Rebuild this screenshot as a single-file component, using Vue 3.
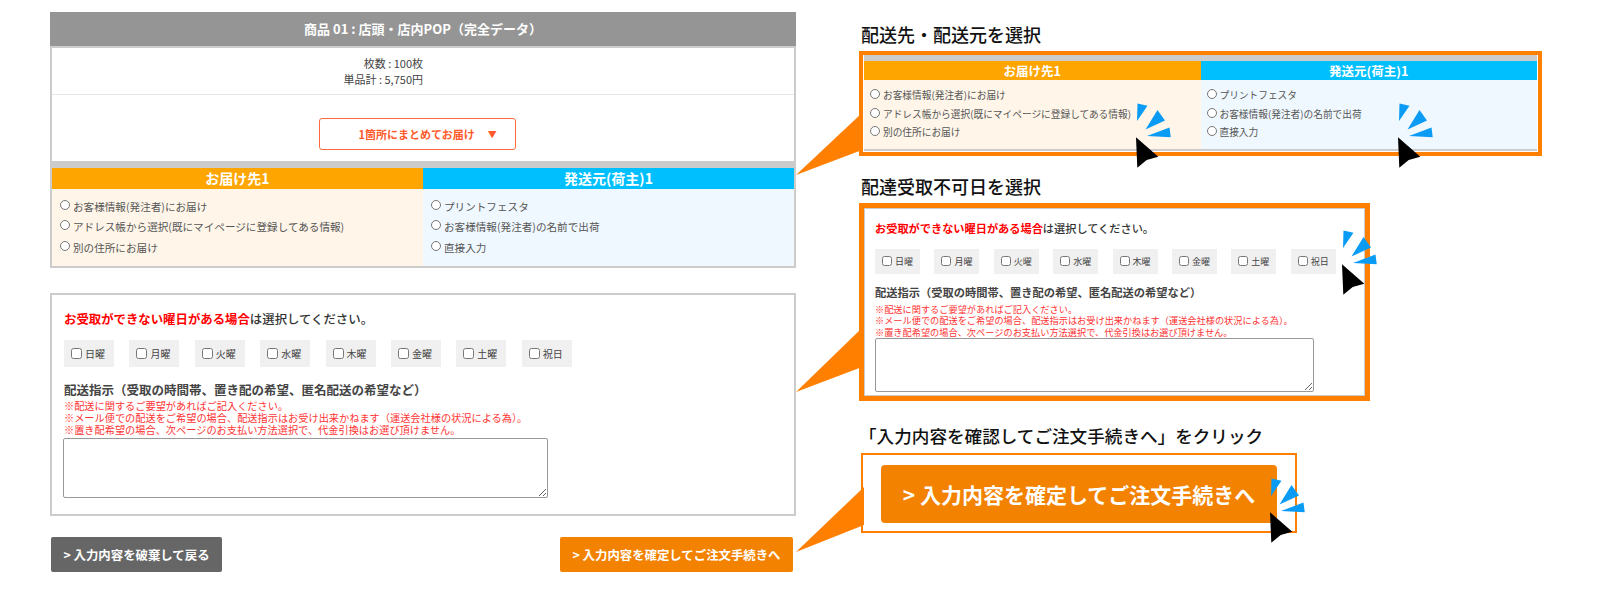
<script setup>
const daysOff = ['日曜', '月曜', '火曜', '水曜', '木曜', '金曜', '土曜', '祝日']
const destinations = ['お客様情報(発注者)にお届け', 'アドレス帳から選択(既にマイページに登録してある情報)', '別の住所にお届け']
const senders = ['プリントフェスタ', 'お客様情報(発注者)の名前で出荷', '直接入力']
const notes = [
  '※配送に関するご要望があればご記入ください。',
  '※メール便での配送をご希望の場合、配送指示はお受け出来かねます（運送会社様の状況による為）。',
  '※置き配希望の場合、次ページのお支払い方法選択で、代金引換はお選び頂けません。',
]
const bursts = [
  { left: 1136, top: 103 },
  { left: 1398, top: 103 },
  { left: 1342, top: 230 },
  { left: 1270, top: 478 },
]
</script>

<template>
  <div class="page">
    <main class="left">
      <section class="product">
        <h2 class="product-title">商品 01 : 店頭・店内POP（完全データ）</h2>
        <div class="info">
          <div>枚数 : 100枚</div>
          <div>単品計 : 5,750円</div>
        </div>
        <div class="select-row">
          <div class="select"><span>1箇所にまとめてお届け</span><span class="arrow">▼</span></div>
        </div>
        <div class="band"></div>
        <div class="ship">
          <div class="ship-col dest">
            <h3>お届け先1</h3>
            <ul>
              <li v-for="d in destinations" :key="d"><input type="radio" name="a" /><span>{{ d }}</span></li>
            </ul>
          </div>
          <div class="ship-col from">
            <h3>発送元(荷主)1</h3>
            <ul>
              <li v-for="s in senders" :key="s"><input type="radio" name="b" /><span>{{ s }}</span></li>
            </ul>
          </div>
        </div>
      </section>

      <section class="form">
        <p class="lead"><b>お受取ができない曜日がある場合</b>は選択してください。</p>
        <div class="days">
          <label v-for="d in daysOff" :key="d" class="day"><input type="checkbox" /><span>{{ d }}</span></label>
        </div>
        <p class="instr">配送指示（受取の時間帯、置き配の希望、匿名配送の希望など）</p>
        <div class="notes"><div v-for="n in notes" :key="n">{{ n }}</div></div>
        <textarea class="memo"></textarea>
      </section>

      <div class="actions">
        <button class="btn back">&gt; 入力内容を破棄して戻る</button>
        <button class="btn next">&gt; 入力内容を確定してご注文手続きへ</button>
      </div>
    </main>

    <aside class="right">
      <h2 class="step">配送先・配送元を選択</h2>
      <div class="frame1">
        <div class="band small"></div>
        <div class="ship small">
          <div class="ship-col dest">
            <h3>お届け先1</h3>
            <ul>
              <li v-for="d in destinations" :key="d"><input type="radio" name="c" /><span>{{ d }}</span></li>
            </ul>
          </div>
          <div class="ship-col from">
            <h3>発送元(荷主)1</h3>
            <ul>
              <li v-for="s in senders" :key="s"><input type="radio" name="d" /><span>{{ s }}</span></li>
            </ul>
          </div>
        </div>
      </div>

      <h2 class="step second">配達受取不可日を選択</h2>
      <div class="frame2">
        <p class="lead"><b>お受取ができない曜日がある場合</b>は選択してください。</p>
        <div class="days">
          <label v-for="d in daysOff" :key="d" class="day"><input type="checkbox" /><span>{{ d }}</span></label>
        </div>
        <p class="instr">配送指示（受取の時間帯、置き配の希望、匿名配送の希望など）</p>
        <div class="notes"><div v-for="n in notes" :key="n">{{ n }}</div></div>
        <textarea class="memo"></textarea>
      </div>

      <h2 class="step third">「入力内容を確認してご注文手続きへ」をクリック</h2>
      <div class="frame3">
        <button class="big">&gt; 入力内容を確定してご注文手続きへ</button>
      </div>
    </aside>

    <svg class="callouts" width="1600" height="600" viewBox="0 0 1600 600" aria-hidden="true">
      <polygon points="796,175 862,113 862,150" fill="#ff8000" />
      <polygon points="796,392 862,328 862,367" fill="#ff8000" />
      <polygon points="796,552 864,487 864,525" fill="#ff8000" />
    </svg>

    <svg
      v-for="b in bursts"
      :key="b.left"
      class="burst"
      :style="{ left: b.left + 'px', top: b.top + 'px' }"
      width="36"
      height="66"
      viewBox="0 0 36 66"
      aria-hidden="true"
    >
      <polygon points="1.5,0.5 11.5,2.8 1,18" fill="#0a9bf5" />
      <polygon points="21.5,7 29,17.5 9.5,26.5" fill="#0a9bf5" />
      <polygon points="33.5,24.5 34.7,34.2 11,33" fill="#0a9bf5" />
      <polygon points="0,34.3 22.3,53.7 10.7,57 1.3,64.7" fill="#000" />
    </svg>
  </div>
</template>

<style>
html, body { margin: 0; background: #fff; overflow: hidden; }
</style>

<style scoped>
.page {
  position: relative;
  width: 1600px;
  height: 600px;
  box-sizing: border-box;
  padding: 12px 0 0 50px;
  display: flex;
  align-items: flex-start;
  font-family: "Noto Sans CJK JP", "Noto Sans", sans-serif;
  color: #333;
  overflow: hidden;
}
h2, h3, p, ul { margin: 0; padding: 0; }
ul { list-style: none; }

.left { width: 746px; flex: none; display: flex; flex-direction: column; }

.product { border: 2px solid #ccc; border-top: 0; background: #fff; }
.product-title {
  margin: 0 -2px;
  height: 34px;
  line-height: 34px;
  background: #959595;
  color: #fff;
  font-size: 13px;
  font-weight: 700;
  text-align: center;
  border-bottom: 2px solid #ccc;
}
.info {
  height: 47px;
  box-sizing: border-box;
  padding-top: 7px;
  border-bottom: 1px solid #e6e6e6;
  font-size: 11px;
  line-height: 16px;
  text-align: right;
  color: #444;
  padding-right: 371px;
}
.select-row { height: 66px; display: flex; justify-content: center; padding: 23px 12px 0 0; box-sizing: border-box; }
.select {
  width: 197px;
  height: 32px;
  box-sizing: border-box;
  border: 1px solid #ff6a3c;
  border-radius: 3px;
  color: #ff5a2a;
  font-size: 11px;
  font-weight: 700;
  display: flex;
  align-items: center;
  padding-left: 39px;
  gap: 13px;
}
.arrow { font-size: 9px; }
.band { height: 7px; background: #ccc; margin: 0; }

.ship { display: grid; grid-template-columns: 1fr 1fr; }
.ship-col h3 {
  height: 21px;
  line-height: 21px;
  color: #fff;
  font-size: 14px;
  font-weight: 700;
  text-align: center;
}
.dest { background: #fff5e9; }
.dest h3 { background: #ffa500; }
.from { background: #f0f8ff; }
.from h3 { background: #00bfff; }
.ship-col ul { height: 77px; padding: 7px 0 0 8px; box-sizing: border-box; font-size: 10.6px; color: #555; }
.ship-col li { height: 20.6px; display: flex; align-items: center; }
.ship-col input { width: 10px; height: 10px; margin: 0 3px 3px 0; flex: none; }

.form {
  margin-top: 25px;
  height: 223px;
  box-sizing: border-box;
  border: 2px solid #ccc;
  padding: 15px 12px 0;
  background: #fff;
}
.lead { font-size: 12.4px; line-height: 18px; font-weight: 500; color: #333; }
.lead b { color: #f00; font-weight: 700; }
.days { display: flex; gap: 15.4px; margin-top: 12px; }
.day {
  width: 50px;
  height: 27px;
  background: #f0f0f0;
  font-size: 10px;
  color: #444;
  display: flex;
  align-items: center;
  padding-left: 7px;
  box-sizing: border-box;
  gap: 3px;
}
.day input { width: 11px; height: 11px; margin: 0 0 1px; }
.instr { margin-top: 14px; font-size: 12.5px; line-height: 18px; font-weight: 700; color: #444; }
.notes { margin-top: 1px; font-size: 10.2px; line-height: 12px; color: #f33; }
.memo {
  display: block;
  width: 485px;
  height: 60px;
  box-sizing: border-box;
  margin: 2px 0 0 -1px;
  border: 1px solid #999;
  border-radius: 2px;
  background: #fff;
  padding: 2px;
}

.actions { display: flex; justify-content: space-between; padding: 0 3px 0 1px; margin-top: 21px; }
.btn {
  height: 35px;
  border: 0;
  border-radius: 2px;
  color: #fff;
  font-family: inherit;
  font-size: 12.4px;
  font-weight: 700;
  padding: 0;
}
.back { width: 171px; background: #666; }
.next { width: 233px; background: #f38200; }

.right { margin-left: 65px; width: 690px; flex: none; display: flex; flex-direction: column; align-items: flex-start; }
.step { height: 27px; margin-top: 9px; line-height: 27px; font-size: 18px; font-weight: 500; color: #111; }
.step.second { margin-top: 17px; }
.step.third { margin: 22px 0 0 -2px; height: 25px; line-height: 25px; font-size: 17.6px; }

.frame1 {
  width: 683px;
  height: 105px;
  margin-top: 3px;
  margin-left: -2px;
  box-sizing: border-box;
  border: 4px solid #ff8000;
  background: #fff;
  padding: 0 1px;
}
.band.small { height: 6px; }
.ship.small { border-bottom: 2px solid #ccc; }
.small .ship-col h3 { height: 19px; line-height: 19px; font-size: 12.5px; }
.small .ship-col ul { height: 69px; padding: 6px 0 0 6px; font-size: 9.7px; }
.small .ship-col li { height: 18.5px; }
.small .ship-col input { width: 10px; height: 10px; margin: 0 3px 2px 0; }

.frame2 {
  width: 511px;
  height: 198px;
  margin-top: 3px;
  margin-left: -2px;
  box-sizing: border-box;
  border: 5px solid #ff8000;
  box-shadow: inset 0 0 0 1px #ccc;
  padding: 12px 11px 0;
  background: #fff;
}
.frame2 .lead { font-size: 11.2px; line-height: 16px; }
.frame2 .days { gap: 14.4px; margin-top: 13px; }
.frame2 .day { width: 45px; height: 25px; font-size: 9px; padding-left: 7px; }
.frame2 .day input { width: 10px; height: 10px; }
.frame2 .instr { margin-top: 10px; font-size: 11.25px; line-height: 17px; }
.frame2 .notes { font-size: 9.2px; line-height: 11.3px; margin-top: 3px; }
.frame2 .memo { width: 439px; height: 54px; margin: 0; }

.frame3 {
  width: 436px;
  height: 80px;
  margin-top: 5px;
  box-sizing: border-box;
  border: 2px solid #ff8000;
  padding: 10px 0 0 18px;
  background: #fff;
}
.big {
  width: 396px;
  height: 58px;
  border: 0;
  border-radius: 4px;
  background: #f38200;
  color: #fff;
  font-family: inherit;
  font-size: 21px;
  font-weight: 700;
  padding: 0;
}

.callouts { position: absolute; left: 0; top: 0; pointer-events: none; }
.burst { position: absolute; pointer-events: none; }
</style>
